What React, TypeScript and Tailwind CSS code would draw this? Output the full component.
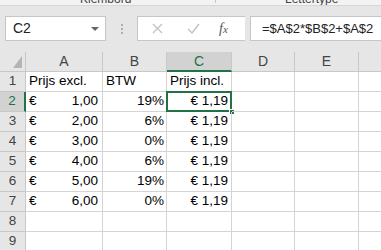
import React from "react";

const cols = [
  { key: "A", w: "w-[77px]" },
  { key: "B", w: "w-[64px]" },
  { key: "C", w: "w-[65px]" },
  { key: "D", w: "w-[63px]" },
  { key: "E", w: "w-[64px]" },
];

const rows = [
  { a: "1,00", b: "19%" },
  { a: "2,00", b: "6%" },
  { a: "3,00", b: "0%" },
  { a: "4,00", b: "6%" },
  { a: "5,00", b: "19%" },
  { a: "6,00", b: "0%" },
];

function Cell({ w, children, className = "" }: { w: string; children?: React.ReactNode; className?: string }) {
  return (
    <div className={`${w} h-[20px] shrink-0 border-r border-b border-[#d4d4d4] relative flex items-center px-[3px] ${className}`}>
      {children}
    </div>
  );
}

function RowHead({ n, active }: { n: number; active?: boolean }) {
  return (
    <div
      className={`w-[26px] h-[20px] shrink-0 flex items-center justify-center border-b border-[#c8c8c8] ${
        active ? "bg-[#d2d2d2] text-[#217346] border-r-2 border-r-[#217346]" : "bg-[#e6e6e6] text-[#444] border-r border-r-[#c8c8c8]"
      }`}
    >
      {n}
    </div>
  );
}

export default function App() {
  return (
    <div className="w-[381px] h-[250px] overflow-hidden bg-white text-[13.5px] text-black" style={{ fontFamily: '"Liberation Sans", Arial, sans-serif' }}>
      {/* ribbon group labels, cut off */}
      <div className="h-[6px] bg-[#f3f3f3] border-b border-[#d6d6d6] relative overflow-hidden text-[12px] text-[#444]">
        <span className="absolute left-[80px] -top-[10px]">Klembord</span>
        <span className="absolute left-[285px] -top-[10px]">Lettertype</span>
        <span className="absolute left-[215px] top-0 w-px h-[3px] bg-[#c6c6c6]" />
      </div>

      {/* formula bar */}
      <div className="h-[46px] bg-[#e6e6e6] flex items-start pt-[10px]">
        <div className="ml-[5px] w-[101px] h-[25px] bg-white border border-[#c6c6c6] flex items-center justify-between pl-[7px] pr-[6px]">
          <span className="text-[#222] text-[14px]">C2</span>
          <span className="w-0 h-0 border-l-[4px] border-r-[4px] border-t-[4px] border-l-transparent border-r-transparent border-t-[#666]" />
        </div>
        <div className="w-[31px] h-[25px] flex flex-col items-center justify-center gap-[2px]">
          <span className="w-[2px] h-[2px] bg-[#b0b0b0]" />
          <span className="w-[2px] h-[2px] bg-[#b0b0b0]" />
          <span className="w-[2px] h-[2px] bg-[#b0b0b0]" />
        </div>
        <div className="w-[108px] h-[25px] bg-white border border-r-0 border-[#c6c6c6] flex items-center">
          <svg className="ml-[14px]" width="11" height="11" viewBox="0 0 11 11">
            <path d="M1 1 L10 10 M10 1 L1 10" stroke="#c2c2c2" strokeWidth="1.3" />
          </svg>
          <svg className="ml-[24px]" width="13" height="11" viewBox="0 0 13 11">
            <path d="M1 6 L5 10 L12 1" stroke="#c2c2c2" strokeWidth="1.4" fill="none" />
          </svg>
          <span className="ml-[19px] text-[#555] italic text-[14px]" style={{ fontFamily: '"Liberation Serif", serif' }}>
            f<span className="text-[11px]">x</span>
          </span>
        </div>
        <div className="ml-[5px] flex-1 h-[25px] bg-white border border-r-0 border-[#c6c6c6] flex items-center pl-[11px] text-[#222] text-[13px]">
          =$A$2*$B$2+$A$2
        </div>
      </div>

      {/* column headers */}
      <div className="flex h-[20px] bg-[#e6e6e6] text-[#444] text-[14px]">
        <div className="w-[26px] shrink-0 border-r border-b border-[#c8c8c8] relative">
          <span className="absolute right-[3px] bottom-[3px] w-0 h-0" style={{ borderRight: "9px solid #b4b4b4", borderTop: "12px solid transparent" }} />
        </div>
        {cols.map((c) => (
          <div
            key={c.key}
            className={`${c.w} shrink-0 flex items-center justify-center border-r border-[#c8c8c8] ${
              c.key === "C" ? "bg-[#d2d2d2] text-[#217346] border-b-2 border-b-[#217346]" : "border-b border-b-[#c8c8c8]"
            }`}
          >
            {c.key}
          </div>
        ))}
        <div className="flex-1 border-b border-[#c8c8c8]" />
      </div>

      {/* row 1 */}
      <div className="flex">
        <RowHead n={1} />
        <Cell w="w-[77px]">Prijs excl.</Cell>
        <Cell w="w-[64px]">BTW</Cell>
        <Cell w="w-[65px]">Prijs incl.</Cell>
        <Cell w="w-[63px]" />
        <Cell w="w-[64px]" />
        <div className="flex-1 h-[20px] border-b border-[#d4d4d4]" />
      </div>

      {rows.map((r, i) => (
        <div key={i} className="flex">
          <RowHead n={i + 2} active={i === 0} />
          <Cell w="w-[77px]" className="justify-between pr-[4px]">
            <span>€</span>
            <span>{r.a}</span>
          </Cell>
          <Cell w="w-[64px]" className="justify-end pr-[2px]">
            {r.b}
          </Cell>
          <Cell w="w-[65px]" className="justify-end pr-[3px]">
            € 1,19
            {i === 0 && (
              <>
                <span className="absolute -left-[1px] -top-[1px] -right-[1px] -bottom-[1px] border-2 border-[#217346]" />
                <span className="absolute -right-[4px] -bottom-[4px] w-[6px] h-[6px] bg-[#217346] border border-white" />
              </>
            )}
          </Cell>
          <Cell w="w-[63px]" />
          <Cell w="w-[64px]" />
          <div className="flex-1 h-[20px] border-b border-[#d4d4d4]" />
        </div>
      ))}

      {[8, 9].map((n) => (
        <div key={n} className="flex">
          <RowHead n={n} />
          {cols.map((c) => (
            <Cell key={c.key} w={c.w} />
          ))}
          <div className="flex-1 h-[20px] border-b border-[#d4d4d4]" />
        </div>
      ))}
    </div>
  );
}
